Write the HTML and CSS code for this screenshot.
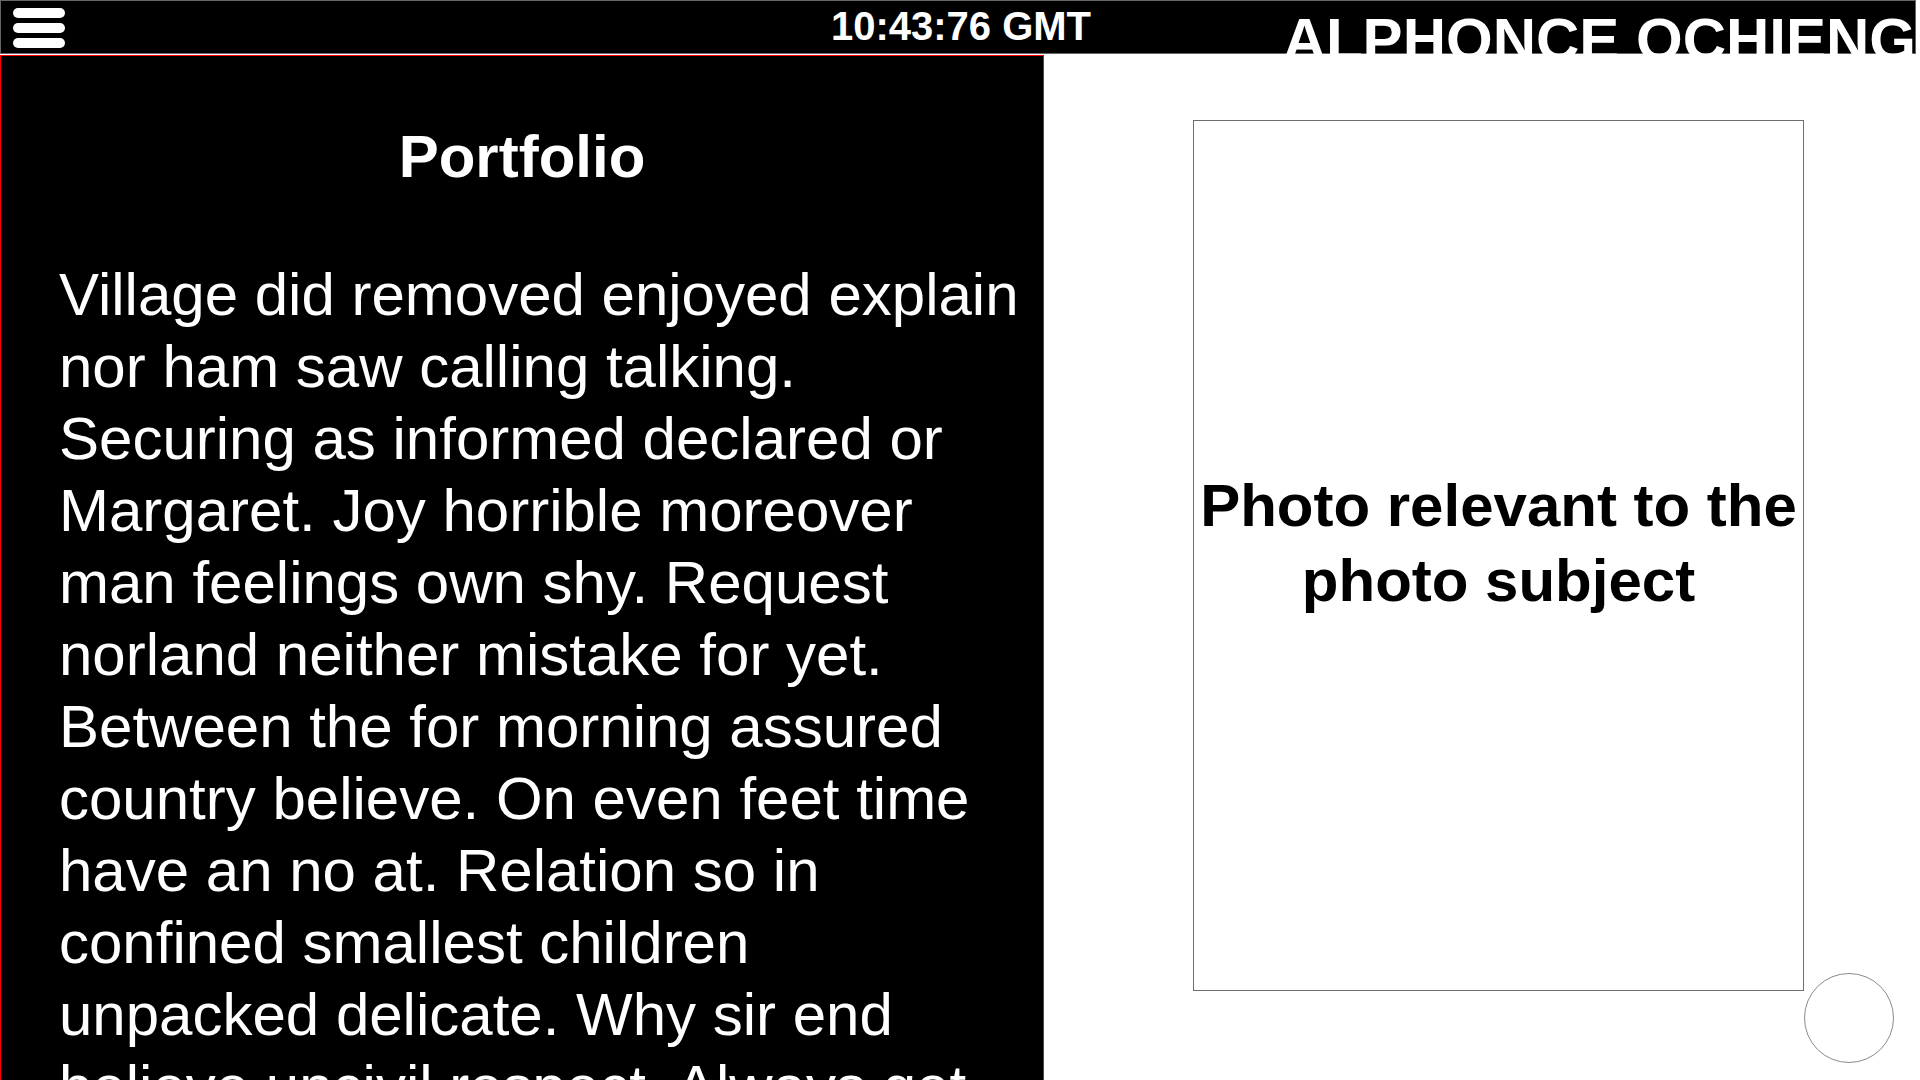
FILE: index.html
```html
<!DOCTYPE html>
<html lang="en">
<head>
<meta charset="utf-8">
<title>Alphonce Ochieng — Portfolio</title>
<link rel="stylesheet" href="styles.css">
</head>
<body>
<header class="topbar">
  <button class="menu" aria-label="Menu">
    <span class="bar"></span>
    <span class="bar"></span>
    <span class="bar"></span>
  </button>
  <div class="clock">10:43:76 GMT</div>
  <div class="name">ALPHONCE OCHIENG</div>
</header>
<main class="layout">
  <section class="panel">
    <h1 class="panel-title">Portfolio</h1>
    <p class="panel-text">Village did removed enjoyed explain nor ham saw calling talking. Securing as informed declared or Margaret. Joy horrible moreover man feelings own shy. Request norland neither mistake for yet. Between the for morning assured country believe. On even feet time have an no at. Relation so in confined smallest children unpacked delicate. Why sir end believe uncivil respect. Always get adieus nature day course for common. My little garret repair to desire he esteem.</p>
  </section>
  <aside class="side">
    <div class="photo">
      <span class="photo-caption">Photo relevant to the photo subject</span>
    </div>
  </aside>
</main>
<button class="fab" aria-label="Action"></button>
</body>
</html>
```
FILE: styles.css
```css
html, body {
  margin: 0;
  padding: 0;
  background: #ffffff;
  overflow: hidden;
  font-family: "Liberation Sans", Arial, Helvetica, sans-serif;
}

.topbar {
  box-sizing: border-box;
  width: 1916px;
  height: 54px;
  background: #000000;
  border: 1px solid #666666;
  display: grid;
  grid-template-columns: 1fr auto 1fr;
  align-items: start;
  color: #ffffff;
  position: relative;
  z-index: 2;
}

.menu {
  justify-self: start;
  margin: 7px 0 0 12px;
  padding: 0;
  border: 0;
  background: transparent;
  display: flex;
  flex-direction: column;
  gap: 5px;
  cursor: pointer;
}

.bar {
  display: block;
  width: 52px;
  height: 10px;
  border-radius: 5px;
  background: #ffffff;
}

.clock {
  margin-top: 2px;
  padding-left: 6px;
  font-size: 40px;
  line-height: 46px;
  font-weight: 700;
  white-space: nowrap;
}

.name {
  justify-self: end;
  margin: 4px -1px 0 0;
  font-size: 60px;
  line-height: 69px;
  font-weight: 700;
  white-space: nowrap;
}

.layout {
  display: flex;
  align-items: flex-start;
  margin-top: 1px;
}

.panel {
  box-sizing: border-box;
  flex: 0 0 1044px;
  width: 1044px;
  min-height: 1200px;
  background: #000000;
  border: 1px solid #ff0000;
  color: #ffffff;
  padding-top: 68px;
}

.panel-title {
  margin: 0;
  font-size: 60px;
  line-height: 66px;
  font-weight: 700;
  text-align: center;
}

.panel-text {
  margin: 69px 0 0;
  padding: 0 21px 0 58px;
  font-size: 60px;
  line-height: 72px;
  font-weight: 400;
}

.side {
  flex: 1;
  padding: 65px 0 0 149px;
}

.photo {
  box-sizing: border-box;
  width: 611px;
  height: 871px;
  border: 1px solid #6e6e6e;
  display: flex;
  align-items: center;
  justify-content: center;
  padding-bottom: 25px;
  text-align: center;
}

.photo-caption {
  font-size: 60px;
  line-height: 75px;
  font-weight: 700;
  color: #000000;
}

.fab {
  position: fixed;
  right: 26px;
  bottom: 17px;
  width: 90px;
  height: 90px;
  box-sizing: border-box;
  border: 1px solid #8a8a8a;
  border-radius: 50%;
  background: #ffffff;
  padding: 0;
}
```
